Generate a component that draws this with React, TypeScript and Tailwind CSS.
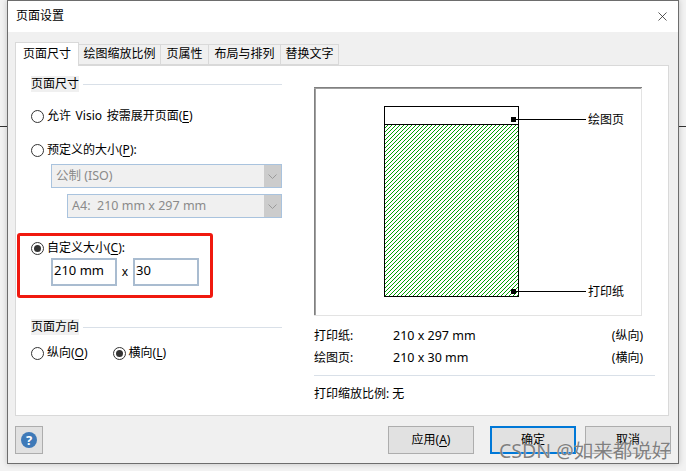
import { X } from "lucide-react";

const font = { fontFamily: '"Noto Sans", "Noto Sans CJK SC", sans-serif' };

function Radio({ checked }: { checked?: boolean }) {
  return (
    <span className="flex h-[13px] w-[13px] shrink-0 items-center justify-center rounded-full border border-[#333] bg-white">
      {checked && <span className="h-[7px] w-[7px] rounded-full bg-[#333]" />}
    </span>
  );
}

function Key({ k }: { k: string }) {
  return <span className="underline underline-offset-2">{k}</span>;
}

function RadioLabel({ checked, children }: { checked?: boolean; children: React.ReactNode }) {
  return (
    <label className="flex h-4 items-center gap-[3px] whitespace-nowrap">
      <Radio checked={checked} />
      <span>{children}</span>
    </label>
  );
}

function Combo({ text, className }: { text: string; className: string }) {
  return (
    <div className={`flex h-6 items-stretch justify-between border border-[#a9c3de] bg-[#f0f0f0] pl-1 text-[#8a8a8a] ${className}`}>
      <span className="whitespace-pre text-[12.5px] leading-[21px]">{text}</span>
      <span className="flex w-[17px] items-center justify-center bg-[#cccccc]">
        <svg width="9" height="5" viewBox="0 0 9 5" fill="none" stroke="#9a9a9a"><path d="M0.5 0.5 4.5 4.5 8.5 0.5" /></svg>
      </span>
    </div>
  );
}

function GroupTitle({ text }: { text: string }) {
  return (
    <div className="flex items-center gap-1">
      <span className="bg-[#f0f0f0] leading-4">{text}</span>
      <span className="h-px w-[199px] bg-[#d9e0e8]" />
    </div>
  );
}

function Btn({ children, primary }: { children: React.ReactNode; primary?: boolean }) {
  return (
    <button className={`flex h-7 w-[86px] items-center justify-center bg-[#e1e1e1] ${primary ? "border-2 border-[#0078d7]" : "border border-[#adadad]"}`}>
      {children}
    </button>
  );
}

function Preview() {
  return (
    <svg width="328" height="229" viewBox="0 0 328 229" className="block" shapeRendering="crispEdges">
      <defs>
        <pattern id="hatch" width="4" height="4" patternUnits="userSpaceOnUse">
          <rect width="4" height="4" fill="#ffffff" />
          <path d="M0 3h1v1H0zM1 2h1v1H1zM2 1h1v1H2zM3 0h1v1H3z" fill="#00a000" />
        </pattern>
      </defs>
      <rect width="328" height="229" fill="#fff" />
      <path d="M0 .5H328M.5 0V229" stroke="#808080" />
      <path d="M0 1.5H327M1.5 1V228" stroke="#a0a0a0" />
      <path d="M327.5 1V229M0 228.5H328" stroke="#e3e3e3" />
      <rect x="70.5" y="19.5" width="134" height="190" fill="#fff" stroke="#000" />
      <rect x="71" y="38" width="133" height="171" fill="url(#hatch)" />
      <path d="M70 37.5H205" stroke="#000" />
      <rect x="197" y="30" width="5" height="5" fill="#000" />
      <rect x="197" y="202" width="5" height="5" fill="#000" />
      <path d="M202 32.5H272M202 204.5H272" stroke="#000" />
      <text x="274" y="37" fontSize="12" fill="#000" shapeRendering="auto">绘图页</text>
      <text x="274" y="209" fontSize="12" fill="#000" shapeRendering="auto">打印纸</text>
    </svg>
  );
}

const tabs = [
  { label: "绘图缩放比例", w: "w-[82px]" },
  { label: "页属性", w: "w-[48px]" },
  { label: "布局与排列", w: "w-[72px]" },
  { label: "替换文字", w: "w-[58px]" },
];

export default function App() {
  return (
    <div className="relative h-[471px] w-[686px] overflow-hidden bg-[#f2f2f2] text-xs text-black" style={font}>
      {/* desktop behind the dialog */}
      <div className="absolute left-0 top-[126px] h-px w-full bg-[#333]" />

      <div className="absolute left-[7px] top-0 flex h-[464px] w-[672px] flex-col border border-[#6d6d6d] bg-[#f0f0f0] shadow-[0_0_6px_rgba(0,0,0,0.2)]">
        <div className="flex h-[31px] shrink-0 items-center justify-between bg-white pb-[1px] pl-2 pr-2">
          <span>页面设置</span>
          <X size={15} strokeWidth={1.2} className="text-[#222]" />
        </div>

        <div className="flex h-[33px] shrink-0 items-end pl-[7px]">
          <div className="z-10 -mb-px flex h-6 w-[64px] items-center justify-center border border-b-0 border-[#d9d9d9] bg-white pb-[2px]">页面尺寸</div>
          {tabs.map((t) => (
            <div key={t.label} className={`flex h-[21px] items-center justify-center border border-l-0 border-[#d9d9d9] bg-[#f0f0f0] pb-[1px] ${t.w}`}>
              {t.label}
            </div>
          ))}
        </div>

        <div className="ml-[7px] flex h-[351px] w-[654px] shrink-0 border border-[#d9d9d9] bg-white">
          <div className="flex w-[298px] shrink-0 flex-col pl-[15px] pt-[10px]">
            <GroupTitle text="页面尺寸" />
            <div className="mt-[16px]">
              <RadioLabel>
                <span className="[word-spacing:1.5px]">允许 Visio 按需展开页面</span>(<Key k="E" />)
              </RadioLabel>
            </div>
            <div className="mt-[18px]">
              <RadioLabel>
                预定义的大小(<Key k="P" />):
              </RadioLabel>
            </div>
            <Combo text="公制 (ISO)" className="ml-5 mt-[6px] w-[231px]" />
            <Combo text="A4:  210 mm x 297 mm" className="ml-9 mt-[6px] w-[215px]" />

            <div className="-ml-[14px] mt-[15px] h-[65px] w-[196px] rounded-[3px] border-[3px] border-[#f0190f] pl-[11px] pt-[4px]">
              <RadioLabel checked>
                自定义大小(<Key k="C" />):
              </RadioLabel>
              <div className="mt-[2px] flex items-center pl-5">
                <div className="h-7 w-[66px] border-2 border-[#a9bcd0] pl-[1px] text-[13px] leading-[20px]">210 mm</div>
                <span className="w-4 text-center">x</span>
                <div className="h-7 w-[66px] border-2 border-[#a9bcd0] pl-[1px] text-[13px] leading-[20px]">30</div>
              </div>
            </div>

            <div className="mt-[21px]">
              <GroupTitle text="页面方向" />
            </div>
            <div className="mt-[10px] flex gap-[25px]">
              <RadioLabel>
                纵向(<Key k="O" />)
              </RadioLabel>
              <RadioLabel checked>
                横向(<Key k="L" />)
              </RadioLabel>
            </div>
          </div>

          <div className="flex w-[341px] shrink-0 flex-col pt-[21px]">
            <Preview />
            <div className="mt-[11px] grid w-[329px] grid-cols-[79px_1fr_auto] gap-y-[5px] leading-[17px]">
              <span>打印纸:</span>
              <span className="text-[12.5px]">210 x 297 mm</span>
              <span>(纵向)</span>
              <span>绘图页:</span>
              <span className="text-[12.5px]">210 x 30 mm</span>
              <span>(横向)</span>
            </div>
            <div className="mt-[9px] h-px w-[341px] bg-[#d9e0e8]" />
            <div className="mt-[9px] leading-[17px]">打印缩放比例: 无</div>
          </div>
        </div>

        <div className="flex items-start justify-between pl-[7px] pr-[7px] pt-[10px]">
          <button className="flex h-7 w-7 items-center justify-center border border-[#adadad] bg-[#e1e1e1]">
            <span className="flex h-4 w-4 items-center justify-center rounded-full bg-[#3f7ab8] text-[13px] font-bold leading-none text-white">?</span>
          </button>
          <div className="flex">
            <Btn>
              <span>
                应用(<Key k="A" />)
              </span>
            </Btn>
            <div className="ml-4">
              <Btn primary>确定</Btn>
            </div>
            <div className="ml-[9px]">
              <Btn>取消</Btn>
            </div>
          </div>
        </div>
      </div>

      {/* CSDN watermark */}
      <div className="absolute left-[499px] top-[439px] whitespace-nowrap text-[19.5px] leading-6 text-[#808080] [text-shadow:0_0_1px_rgba(255,255,255,0.9)]">
        CSDN @如来都说好
      </div>
    </div>
  );
}
